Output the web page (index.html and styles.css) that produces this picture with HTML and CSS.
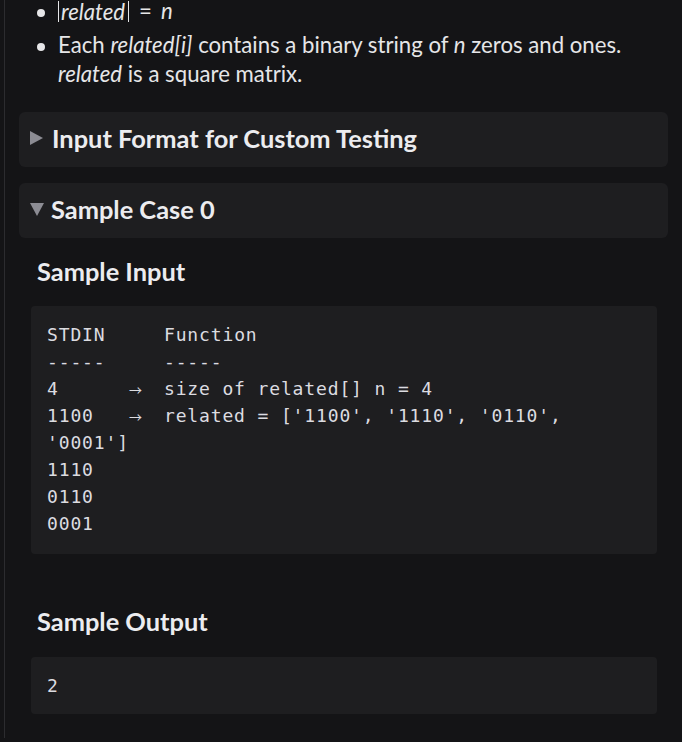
FILE: index.html
```html
<!DOCTYPE html>
<html lang="en">
<head>
<meta charset="utf-8">
<title>Sample Case</title>
<link rel="stylesheet" href="styles.css">
</head>
<body>
<div class="page">
  <ul class="constraints">
    <li><span class="abs"><i>related</i></span><span class="op">=</span><i>n</i></li>
    <li>Each <i>related[i]</i> contains a binary string of <i>n</i> zeros and ones.<br><i>related</i> is a square matrix.</li>
  </ul>

  <details class="section">
    <summary class="section-head"><span class="tri tri-right"></span>Input Format for Custom Testing</summary>
  </details>

  <details class="section" open>
    <summary class="section-head"><span class="tri tri-down"></span>Sample Case 0</summary>
    <div class="section-body">
      <h3 class="sub">Sample Input</h3>
      <pre class="code">STDIN     Function
-----     -----
4      <span class="arrow">→</span>  size of related[] n = 4
1100   <span class="arrow">→</span>  related = ['1100', '1110', '0110',
'0001']
1110
0110
0001</pre>
      <h3 class="sub sub-out">Sample Output</h3>
      <pre class="code code-out">2</pre>
    </div>
  </details>
</div>
</body>
</html>
```

FILE: styles.css
```css
html, body {
  margin: 0;
  padding: 0;
  background: #141416;
}
body {
  font-family: Lato, "Open Sans", sans-serif;
  color: #e6e6e8;
  overflow: hidden;
  height: 742px;
}
.page {
  margin-left: 4px;
  border-left: 1px solid #2c2c2f;
  padding: 0 14px 0 14px;
  min-height: 742px;
}
.constraints {
  margin: -4px 0 0 0;
  padding: 0 0 0 39px;
  list-style: none;
  font-size: 22.2px;
  line-height: 29px;
}
.constraints li {
  position: relative;
  margin-bottom: 5px;
}
.constraints li:last-child {
  margin-bottom: 0;
}
.constraints li::before {
  content: "";
  position: absolute;
  left: -21px;
  top: 13px;
  width: 8px;
  height: 8px;
  border-radius: 50%;
  background: #e6e6e8;
}
.abs {
  display: inline-block;
  border-left: 1px solid #e6e6e8;
  border-right: 1px solid #e6e6e8;
  padding: 0 3px 0 2px;
  line-height: 21px;
  vertical-align: -1px;
}
.op {
  margin: 0 9px 0 10px;
}
.section {
  margin-top: 16px;
}
.constraints + .section {
  margin-top: 24px;
}
.section-head {
  list-style: none;
  display: flex;
  align-items: center;
  height: 55px;
  box-sizing: border-box;
  padding: 0 0 3px 11px;
  background: #1e1e20;
  border-radius: 6px;
  font-size: 25.4px;
  font-weight: 700;
  color: #ececef;
  cursor: pointer;
}
.section-head::-webkit-details-marker {
  display: none;
}
.tri {
  display: inline-block;
  width: 0;
  height: 0;
}
.tri-right {
  border-top: 7px solid transparent;
  border-bottom: 7px solid transparent;
  border-left: 13px solid #8c8c93;
  margin-right: 9px;
}
.tri-down {
  border-left: 7.5px solid transparent;
  border-right: 7.5px solid transparent;
  border-top: 13px solid #8c8c93;
  margin-right: 7px;
}
.section-body {
  padding: 0 11px 0 12px;
}
.sub {
  margin: 0;
  padding: 17px 0 0 6px;
  font-size: 25.4px;
  line-height: 32px;
  font-weight: 700;
  color: #ececef;
}
.sub-out {
  padding-top: 51px;
}
.code {
  margin: 19px 0 0 0;
  background: #1e1e20;
  border-radius: 4px;
  padding: 15px 16px 17px 16px;
  font-family: "DejaVu Sans Mono", monospace;
  font-size: 18px;
  line-height: 27px;
  letter-spacing: 0.86px;
  color: #dcdce0;
  white-space: pre;
}
.arrow {
  display: inline-block;
  width: 11.66px;
  font-family: "Noto Sans CJK SC", sans-serif;
  font-size: 13px;
  letter-spacing: 0;
  line-height: 0;
  text-align: center;
}
.code-out {
  margin-top: 20px;
  padding: 15px 16px 15px 16px;
}
```
